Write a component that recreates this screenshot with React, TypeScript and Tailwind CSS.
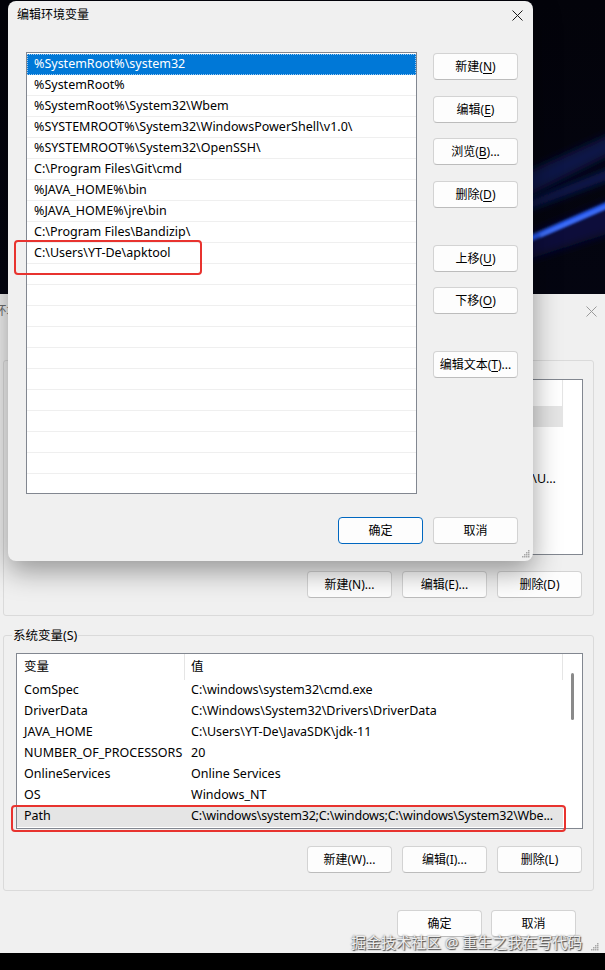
import type { ReactNode } from "react";

const pathEntries = [
  "%SystemRoot%\\system32",
  "%SystemRoot%",
  "%SystemRoot%\\System32\\Wbem",
  "%SYSTEMROOT%\\System32\\WindowsPowerShell\\v1.0\\",
  "%SYSTEMROOT%\\System32\\OpenSSH\\",
  "C:\\Program Files\\Git\\cmd",
  "%JAVA_HOME%\\bin",
  "%JAVA_HOME%\\jre\\bin",
  "C:\\Program Files\\Bandizip\\",
  "C:\\Users\\YT-De\\apktool",
];

const userVars = [
  ["OneDrive", "C:\\Users\\YT-De\\OneDrive"],
  ["OneDriveConsumer", "C:\\Users\\YT-De\\OneDrive"],
  ["ChocolateyLastPathUpdate", "133412345678901234"],
  ["Path", "C:\\Users\\YT-De\\AppData\\Local\\Microsoft\\WindowsApps;C:\\Users\\YT-De\\AppData"],
  ["TEMP", "C:\\Users\\YT-De\\AppData\\Local\\Temp"],
  ["TMP", "C:\\Users\\YT-De\\AppData\\Local\\Temp"],
];

const systemVars = [
  ["ComSpec", "C:\\windows\\system32\\cmd.exe"],
  ["DriverData", "C:\\Windows\\System32\\Drivers\\DriverData"],
  ["JAVA_HOME", "C:\\Users\\YT-De\\JavaSDK\\jdk-11"],
  ["NUMBER_OF_PROCESSORS", "20"],
  ["OnlineServices", "Online Services"],
  ["OS", "Windows_NT"],
  ["Path", "C:\\windows\\system32;C:\\windows;C:\\windows\\System32\\Wbe..."],
];

function Key({ k }: { k: string }) {
  return <span className="underline underline-offset-[2px]">{k}</span>;
}

function Button({
  children,
  focused = false,
  className = "",
}: {
  children: ReactNode;
  focused?: boolean;
  className?: string;
}) {
  return (
    <button
      type="button"
      className={`flex h-[27px] w-[85px] shrink-0 items-center justify-center rounded-[4px] border bg-[#fdfdfd] text-[12px] leading-none text-black ${
        focused ? "border-[#0067c0]" : "border-[#d3d3d3] border-b-[#bcbcbc]"
      } ${className}`}
    >
      {children}
    </button>
  );
}

function CloseIcon({ color }: { color: string }) {
  return (
    <svg width="11" height="11" viewBox="0 0 11 11">
      <path d="M0.5 0.5 L10.5 10.5 M10.5 0.5 L0.5 10.5" stroke={color} strokeWidth="1" />
    </svg>
  );
}

function Grip() {
  return (
    <svg width="8" height="8" viewBox="0 0 8 8">
      {[
        [6, 0],
        [4, 2],
        [6, 2],
        [2, 4],
        [4, 4],
        [6, 4],
        [0, 6],
        [2, 6],
        [4, 6],
        [6, 6],
      ].map(([x, y]) => (
        <rect key={`${x}-${y}`} x={x} y={y} width="1.5" height="1.5" fill="#a8a8a8" />
      ))}
    </svg>
  );
}

function Wallpaper() {
  return (
    <svg className="absolute inset-0" width="605" height="970" viewBox="0 0 605 970">
      <defs>
        <filter id="b4">
          <feGaussianBlur stdDeviation="4" />
        </filter>
        <filter id="b2">
          <feGaussianBlur stdDeviation="1.6" />
        </filter>
        <linearGradient id="deep" x1="0" y1="0" x2="0" y2="1">
          <stop offset="0" stopColor="#03030a" />
          <stop offset="0.6" stopColor="#050717" />
          <stop offset="1" stopColor="#03030a" />
        </linearGradient>
      </defs>
      <rect width="605" height="970" fill="url(#deep)" />
      <polygon points="520,175 620,130 620,150 520,200" fill="#0b1446" filter="url(#b4)" />
      <polygon points="520,205 620,165 620,175 520,212" fill="#0f1c60" filter="url(#b4)" />
      <polygon points="520,238 620,196 620,230 520,262" fill="#07103a" filter="url(#b4)" />
      <polygon points="520,240 620,196 620,203 520,246" fill="#2157f0" filter="url(#b2)" />
      <polygon points="540,234 620,200 620,202 540,237" fill="#4d7cff" filter="url(#b2)" />
      <rect y="953" width="605" height="17" fill="#000" />
    </svg>
  );
}

export default function App() {
  return (
    <div className="relative h-[970px] w-[605px] overflow-hidden bg-black font-['Noto_Sans','Noto_Sans_CJK_SC',sans-serif] text-[12.5px] text-black">
      <Wallpaper />

      {/* 环境变量 (background window) */}
      <div className="absolute left-[-16px] top-[294px] flex h-[659px] w-[630px] flex-col rounded-t-[8px] bg-[#f0f0f0]">
        <div className="flex h-[34px] items-center justify-between pl-[10px] pr-[17px]">
          <span className="text-[#6e6e6e]">环境变量</span>
          <CloseIcon color="#9a9a9a" />
        </div>

        <div className="relative ml-[19px] mt-[32px] flex h-[256px] w-[591px] flex-col rounded-[3px] border border-[#dadada]">
          <span className="absolute left-[8px] top-[-9px] bg-[#f0f0f0] px-[1px]">用户变量(U)</span>
          <div className="ml-[12px] mt-[18px] flex h-[176px] w-[567px] flex-col overflow-hidden border border-[#828790] bg-white">
            <div className="flex h-[26px] shrink-0 items-center">
              <div className="flex h-full w-[168px] items-center border-r border-[#e5e5e5] pl-[7px]">变量</div>
              <div className="flex h-full w-[378px] items-center border-r border-[#e5e5e5] pl-[7px]">值</div>
            </div>
            {userVars.map(([name, value], i) => (
              <div key={name} className={`flex h-[21px] w-[546px] shrink-0 items-center ${i === 0 ? "bg-[#e5e5e5]" : ""}`}>
                <div className="w-[168px] truncate pl-[7px]">{name}</div>
                <div className="w-[376px] truncate pl-[7px]">{value}</div>
              </div>
            ))}
          </div>
          <div className="mt-[16px] flex justify-end gap-[10px] pr-[11px]">
            <Button>新建(N)...</Button>
            <Button>编辑(E)...</Button>
            <Button>删除(D)</Button>
          </div>
        </div>

        <div className="relative ml-[19px] mt-[19px] flex h-[256px] w-[591px] flex-col rounded-[3px] border border-[#dadada]">
          <span className="absolute left-[8px] top-[-9px] bg-[#f0f0f0] px-[1px]">系统变量(S)</span>
          <div className="ml-[12px] mt-[17px] flex h-[176px] w-[567px] overflow-hidden border border-[#828790] bg-white">
            <div className="flex w-[546px] flex-col">
              <div className="flex h-[26px] shrink-0 items-center">
                <div className="flex h-full w-[168px] items-center border-r border-[#e5e5e5] pl-[7px]">变量</div>
                <div className="flex h-full w-[378px] items-center border-r border-[#e5e5e5] pl-[6px]">值</div>
              </div>
              {systemVars.map(([name, value]) => (
                <div
                  key={name}
                  className={`flex h-[21px] shrink-0 items-center ${name === "Path" ? "bg-[#e5e5e5]" : ""}`}
                >
                  <div className="w-[168px] overflow-hidden whitespace-nowrap pl-[7px]">{name}</div>
                  <div
                    className={`w-[376px] overflow-hidden whitespace-nowrap pl-[6px] ${
                      name === "Path" ? "tracking-[-0.18px]" : ""
                    }`}
                  >
                    {value}
                  </div>
                </div>
              ))}
            </div>
            <div className="flex w-[20px] justify-center pt-[19px]">
              <div className="h-[47px] w-[3px] rounded-full bg-[#8a8a8a]" />
            </div>
          </div>
          <div className="mt-[17px] flex justify-end gap-[10px] pr-[11px]">
            <Button>新建(W)...</Button>
            <Button>编辑(I)...</Button>
            <Button>删除(L)</Button>
          </div>
        </div>

        <div className="mt-[19px] flex justify-end gap-[9px] pr-[38px]">
          <Button>确定</Button>
          <Button>取消</Button>
        </div>
        <div className="mt-auto flex justify-end pb-[2px] pr-[15px]">
          <Grip />
        </div>
      </div>

      {/* 编辑环境变量 (foreground window) */}
      <div className="absolute left-[8px] top-[1px] flex h-[560px] w-[525px] flex-col rounded-[8px] bg-[#f0f0f0] shadow-[0_10px_28px_rgba(0,0,0,0.38)]">
        <div className="flex h-[28px] items-center justify-between pl-[9px] pr-[10px]">
          <span className="text-[12px]">编辑环境变量</span>
          <CloseIcon color="#1a1a1a" />
        </div>

        <div className="mt-[23px] flex">
          <div className="ml-[18px] flex h-[442px] w-[391px] flex-col overflow-hidden border border-[#828790] bg-white pt-[1px]">
            {Array.from({ length: 21 }).map((_, i) => (
              <div
                key={i}
                className={`flex h-[21px] shrink-0 items-center border-b pl-[7px] pt-[1px] ${
                  i === 0
                    ? "border-[#0078d7] bg-[#0078d7] text-white outline-1 -outline-offset-1 outline-dotted outline-[#9cc8f0]"
                    : "border-[#efefef]"
                }`}
              >
                {pathEntries[i] ?? ""}
              </div>
            ))}
          </div>

          <div className="ml-[16px] flex flex-col pt-[1px]">
            <Button>
              新建(<Key k="N" />)
            </Button>
            <Button className="mt-[16px]">
              编辑(<Key k="E" />)
            </Button>
            <Button className="mt-[15px]">
              浏览(<Key k="B" />)...
            </Button>
            <Button className="mt-[16px]">
              删除(<Key k="D" />)
            </Button>
            <Button className="mt-[37px]">
              上移(<Key k="U" />)
            </Button>
            <Button className="mt-[15px]">
              下移(<Key k="O" />)
            </Button>
            <Button className="mt-[37px]">
              编辑文本(<Key k="T" />)...
            </Button>
          </div>
        </div>

        <div className="mt-[23px] flex justify-end gap-[10px] pr-[15px]">
          <Button focused>确定</Button>
          <Button>取消</Button>
        </div>
        <div className="mt-auto flex justify-end pb-[3px] pr-[3px]">
          <Grip />
        </div>
      </div>

      {/* red highlight boxes */}
      <div className="absolute left-[14px] top-[240px] h-[35px] w-[188px] rounded-[4px] border-2 border-[#e8332f]" />
      <div className="absolute left-[11px] top-[805px] h-[27px] w-[555px] rounded-[4px] border-2 border-[#e8332f]" />

      {/* watermark */}
      <div className="absolute left-[351px] top-[932px] text-[15px] leading-[20px] text-[#eeeeee] [text-shadow:0_0_2px_#5a5a5a,1px_1px_1px_#4a4a4a]">
        掘金技术社区 @ 重生之我在写代码
      </div>
    </div>
  );
}
